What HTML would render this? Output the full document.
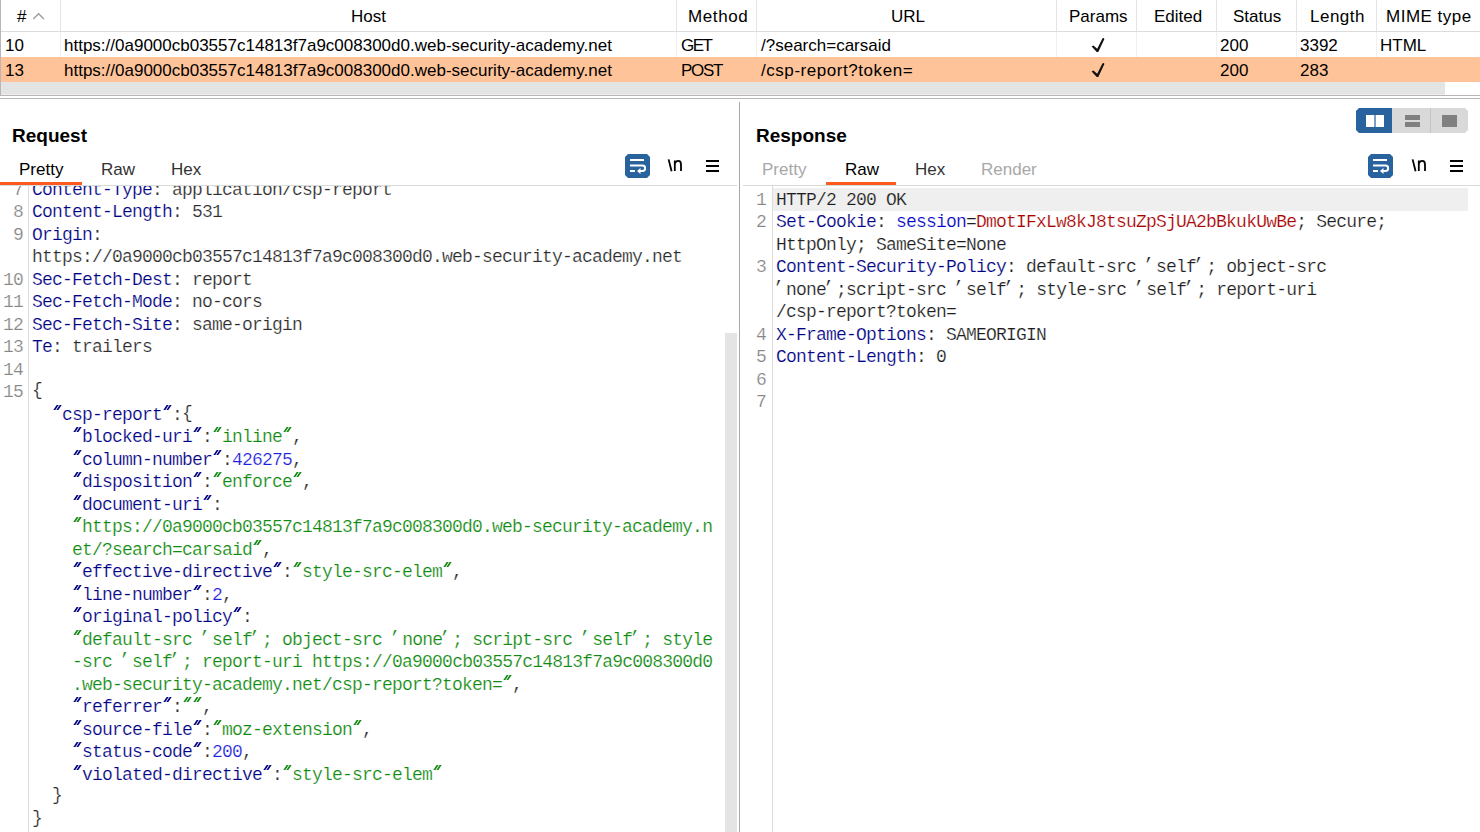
<!DOCTYPE html>
<html><head><meta charset="utf-8">
<style>
*{box-sizing:border-box;margin:0;padding:0}
html,body{width:1480px;height:832px;overflow:hidden;background:#fff}
body{position:relative;font-family:"Liberation Sans",sans-serif;color:#000}
.abs{position:absolute}
.t{position:absolute;white-space:pre;font-size:17px;line-height:20px}
.vl{position:absolute;width:1px;background:#e6e6e6}
.hl{position:absolute;height:1px;background:#e0e0e0}
.ln{position:absolute;white-space:pre;font-family:"Liberation Mono",monospace;font-size:18px;line-height:22px;color:#868686;text-align:right;letter-spacing:-0.8px;-webkit-text-stroke:0.2px #fff}
.cl{position:absolute;white-space:pre;font-family:"Liberation Mono",monospace;font-size:18px;letter-spacing:-0.8px;line-height:22px;-webkit-text-stroke:0.2px #fff}
.hlrow{-webkit-text-stroke:0.2px #efefef}
.k{color:#000084}
.v{color:#2c2c2c}
.b{color:#1c1c1c}
.s{color:#0f8a0f}
.n{color:#1f1fe0}
.c{color:#0000c8}
.r{color:#a80000}
.clip{position:absolute;overflow:hidden}
.q{display:inline-block;width:10px;height:0;position:relative}
.q::before{content:"";box-sizing:border-box;position:absolute;left:2.5px;bottom:10px;width:5px;height:5px;border-left:2px solid currentColor;border-right:2px solid currentColor;transform:skewX(-34deg)}
.sq{position:relative;left:-3px;top:-2px}
.br{position:relative;top:-2px}
</style></head><body>

<!-- table -->
<div class="abs" style="left:0;top:0;width:1px;height:96px;background:#b9b5b8"></div>
<div class="hl" style="left:1px;top:31px;width:1479px;background:#dcdcdc"></div>
<div class="vl" style="left:60px;top:0;height:31px;background:#e4e4e4"></div><div class="vl" style="left:60px;top:32px;height:25px;background:#f0f0f0"></div>
<div class="vl" style="left:676px;top:0;height:31px;background:#e4e4e4"></div><div class="vl" style="left:676px;top:32px;height:25px;background:#f0f0f0"></div>
<div class="vl" style="left:756px;top:0;height:31px;background:#e4e4e4"></div><div class="vl" style="left:756px;top:32px;height:25px;background:#f0f0f0"></div>
<div class="vl" style="left:1056px;top:0;height:31px;background:#e4e4e4"></div><div class="vl" style="left:1056px;top:32px;height:25px;background:#f0f0f0"></div>
<div class="vl" style="left:1136px;top:0;height:31px;background:#e4e4e4"></div><div class="vl" style="left:1136px;top:32px;height:25px;background:#f0f0f0"></div>
<div class="vl" style="left:1216px;top:0;height:31px;background:#e4e4e4"></div><div class="vl" style="left:1216px;top:32px;height:25px;background:#f0f0f0"></div>
<div class="vl" style="left:1296px;top:0;height:31px;background:#e4e4e4"></div><div class="vl" style="left:1296px;top:32px;height:25px;background:#f0f0f0"></div>
<div class="vl" style="left:1376px;top:0;height:31px;background:#e4e4e4"></div><div class="vl" style="left:1376px;top:32px;height:25px;background:#f0f0f0"></div>

<div class="t" style="left:17px;top:7px">#</div>
<svg class="abs" style="left:32px;top:11px" width="14" height="10" viewBox="0 0 14 10"><path d="M1.3 8 L6.6 2.7 L11.9 8" fill="none" stroke="#9a9a9a" stroke-width="1.3"/></svg>
<div class="t" style="left:351px;top:7px">Host</div>
<div class="t" style="left:688px;top:7px;letter-spacing:0.6px">Method</div>
<div class="t" style="left:891px;top:7px">URL</div>
<div class="t" style="left:1069px;top:7px">Params</div>
<div class="t" style="left:1154px;top:7px">Edited</div>
<div class="t" style="left:1233px;top:7px">Status</div>
<div class="t" style="left:1310px;top:7px;letter-spacing:0.5px">Length</div>
<div class="t" style="left:1386px;top:7px;letter-spacing:0.5px">MIME type</div>

<div class="abs" style="left:1px;top:57px;width:1479px;height:25px;background:#ffc399"></div>

<div class="t" style="left:5px;top:36px">10</div>
<div class="t" style="left:64px;top:36px">https://0a9000cb03557c14813f7a9c008300d0.web-security-academy.net</div>
<div class="t" style="left:681px;top:36px;letter-spacing:-1.5px">GET</div>
<div class="t" style="left:761px;top:36px;letter-spacing:0px">/?search=carsaid</div>
<svg class="abs" style="left:1090px;top:37px" width="16" height="16" viewBox="0 0 16 16"><path d="M1.6 9.6L3.4 8.4L7.2 11.8L12.4 1.6C12.8 0.8 14.2 0.9 14.4 1.9L8.3 14.9L6.8 15Z" fill="#111"/></svg>
<div class="t" style="left:1220px;top:36px">200</div>
<div class="t" style="left:1300px;top:36px">3392</div>
<div class="t" style="left:1380px;top:36px">HTML</div>

<div class="t" style="left:5px;top:61px">13</div>
<div class="t" style="left:64px;top:61px">https://0a9000cb03557c14813f7a9c008300d0.web-security-academy.net</div>
<div class="t" style="left:681px;top:61px;letter-spacing:-1.3px">POST</div>
<div class="t" style="left:761px;top:61px;letter-spacing:0.55px">/csp-report?token=</div>
<svg class="abs" style="left:1090px;top:62px" width="16" height="16" viewBox="0 0 16 16"><path d="M1.6 9.6L3.4 8.4L7.2 11.8L12.4 1.6C12.8 0.8 14.2 0.9 14.4 1.9L8.3 14.9L6.8 15Z" fill="#111"/></svg>
<div class="t" style="left:1220px;top:61px">200</div>
<div class="t" style="left:1300px;top:61px">283</div>

<div class="abs" style="left:1px;top:82px;width:1444px;height:12px;background:#e4e4e4"></div><div class="abs" style="left:1px;top:94px;width:1444px;height:1px;background:#eeeeee"></div>
<div class="abs" style="left:0;top:95px;width:1480px;height:1px;background:#bbb5b6"></div>
<div class="abs" style="left:0;top:98px;width:1480px;height:1px;background:#bbb5b6"></div>

<!-- divider -->
<div class="abs" style="left:739px;top:102px;width:1px;height:730px;background:#aaa5a7"></div>

<!-- REQUEST -->
<div class="abs" style="left:12px;top:125px;font-size:19px;font-weight:bold;line-height:22px">Request</div>
<div class="t" style="left:19px;top:160px">Pretty</div>
<div class="t" style="left:101px;top:160px;color:#333">Raw</div>
<div class="t" style="left:171px;top:160px;color:#333">Hex</div>

<!-- wrap btn -->
<svg class="abs" style="left:625px;top:154px" width="25" height="24" viewBox="0 0 25 24"><path d="M3 0H22L25 3V21L22 24H3L0 21V3Z" fill="#29639e"/><path d="M5 6H19M5 11.5H17.5C21 11.5 21 17 17.5 17H13M5 17H10" fill="none" stroke="#fff" stroke-width="2"/><path d="M12 17L15.5 14V20Z" fill="#fff"/></svg>
<svg class="abs" style="left:662px;top:154px" width="26" height="22" viewBox="0 0 26 22"><path d="M6.6 5.4L9.6 17.2M12.8 17V6.4M12.8 9.6C13.6 7.6 15 6.9 16.3 6.9C18.2 6.9 19 8.1 19 10.4V17" fill="none" stroke="#000" stroke-width="1.8"/></svg>
<svg class="abs" style="left:706px;top:160px" width="13" height="12" viewBox="0 0 13 12"><path d="M0 1H13M0 6H13M0 11H13" stroke="#000" stroke-width="2"/></svg>

<div class="abs" style="left:0;top:185px;width:737px;height:1px;background:#d9dbdb"></div>
<div class="abs" style="left:0;top:182px;width:82px;height:3px;background:#ff5a1f"></div>

<div class="abs" style="left:28px;top:186px;width:1px;height:646px;background:#dcdcdc"></div>
<div class="clip" style="left:0;top:186px;width:724px;height:646px">
<div style="position:absolute;left:0;top:-186px">
<div class="ln" style="top:179px;left:0;width:23px">7</div>
<div class="cl" style="top:179px;left:32px"><span class="k">Content-Type</span><span class="v">: application/csp-report</span></div>
<div class="ln" style="top:201px;left:0;width:23px">8</div>
<div class="cl" style="top:201px;left:32px"><span class="k">Content-Length</span><span class="v">: 531</span></div>
<div class="ln" style="top:224px;left:0;width:23px">9</div>
<div class="cl" style="top:224px;left:32px"><span class="k">Origin</span><span class="v">:</span></div>
<div class="cl" style="top:246px;left:32px"><span class="v">https://0a9000cb03557c14813f7a9c008300d0.web-security-academy.net</span></div>
<div class="ln" style="top:269px;left:0;width:23px">10</div>
<div class="cl" style="top:269px;left:32px"><span class="k">Sec-Fetch-Dest</span><span class="v">: report</span></div>
<div class="ln" style="top:291px;left:0;width:23px">11</div>
<div class="cl" style="top:291px;left:32px"><span class="k">Sec-Fetch-Mode</span><span class="v">: no-cors</span></div>
<div class="ln" style="top:314px;left:0;width:23px">12</div>
<div class="cl" style="top:314px;left:32px"><span class="k">Sec-Fetch-Site</span><span class="v">: same-origin</span></div>
<div class="ln" style="top:336px;left:0;width:23px">13</div>
<div class="cl" style="top:336px;left:32px"><span class="k">Te</span><span class="v">: trailers</span></div>
<div class="ln" style="top:359px;left:0;width:23px">14</div>
<div class="ln" style="top:381px;left:0;width:23px">15</div>
<div class="cl" style="top:381px;left:32px"><span class="v"><span class="br">{</span></span></div>
<div class="cl" style="top:404px;left:32px"><span class="v">  </span><span class="k"><span class="q"></span>csp-report<span class="q"></span></span><span class="v">:<span class="br">{</span></span></div>
<div class="cl" style="top:426px;left:32px"><span class="v">    </span><span class="k"><span class="q"></span>blocked-uri<span class="q"></span></span><span class="v">:</span><span class="s"><span class="q"></span>inline<span class="q"></span></span><span class="v">,</span></div>
<div class="cl" style="top:449px;left:32px"><span class="v">    </span><span class="k"><span class="q"></span>column-number<span class="q"></span></span><span class="v">:</span><span class="n">426275</span><span class="v">,</span></div>
<div class="cl" style="top:471px;left:32px"><span class="v">    </span><span class="k"><span class="q"></span>disposition<span class="q"></span></span><span class="v">:</span><span class="s"><span class="q"></span>enforce<span class="q"></span></span><span class="v">,</span></div>
<div class="cl" style="top:494px;left:32px"><span class="v">    </span><span class="k"><span class="q"></span>document-uri<span class="q"></span></span><span class="v">:</span></div>
<div class="cl" style="top:516px;left:32px"><span class="v">    </span><span class="s"><span class="q"></span>https://0a9000cb03557c14813f7a9c008300d0.web-security-academy.n</span></div>
<div class="cl" style="top:539px;left:32px"><span class="v">    </span><span class="s">et/?search=carsaid<span class="q"></span></span><span class="v">,</span></div>
<div class="cl" style="top:561px;left:32px"><span class="v">    </span><span class="k"><span class="q"></span>effective-directive<span class="q"></span></span><span class="v">:</span><span class="s"><span class="q"></span>style-src-elem<span class="q"></span></span><span class="v">,</span></div>
<div class="cl" style="top:584px;left:32px"><span class="v">    </span><span class="k"><span class="q"></span>line-number<span class="q"></span></span><span class="v">:</span><span class="n">2</span><span class="v">,</span></div>
<div class="cl" style="top:606px;left:32px"><span class="v">    </span><span class="k"><span class="q"></span>original-policy<span class="q"></span></span><span class="v">:</span></div>
<div class="cl" style="top:629px;left:32px"><span class="v">    </span><span class="s"><span class="q"></span>default-src <span class="sq">&#8217;</span>self<span class="sq">&#8217;</span>; object-src <span class="sq">&#8217;</span>none<span class="sq">&#8217;</span>; script-src <span class="sq">&#8217;</span>self<span class="sq">&#8217;</span>; style</span></div>
<div class="cl" style="top:651px;left:32px"><span class="v">    </span><span class="s">-src <span class="sq">&#8217;</span>self<span class="sq">&#8217;</span>; report-uri https://0a9000cb03557c14813f7a9c008300d0</span></div>
<div class="cl" style="top:674px;left:32px"><span class="v">    </span><span class="s">.web-security-academy.net/csp-report?token=<span class="q"></span></span><span class="v">,</span></div>
<div class="cl" style="top:696px;left:32px"><span class="v">    </span><span class="k"><span class="q"></span>referrer<span class="q"></span></span><span class="v">:</span><span class="s"><span class="q"></span><span class="q"></span></span><span class="v">,</span></div>
<div class="cl" style="top:719px;left:32px"><span class="v">    </span><span class="k"><span class="q"></span>source-file<span class="q"></span></span><span class="v">:</span><span class="s"><span class="q"></span>moz-extension<span class="q"></span></span><span class="v">,</span></div>
<div class="cl" style="top:741px;left:32px"><span class="v">    </span><span class="k"><span class="q"></span>status-code<span class="q"></span></span><span class="v">:</span><span class="n">200</span><span class="v">,</span></div>
<div class="cl" style="top:764px;left:32px"><span class="v">    </span><span class="k"><span class="q"></span>violated-directive<span class="q"></span></span><span class="v">:</span><span class="s"><span class="q"></span>style-src-elem<span class="q"></span></span></div>
<div class="cl" style="top:786px;left:32px"><span class="v">  <span class="br">}</span></span></div>
<div class="cl" style="top:809px;left:32px"><span class="v"><span class="br">}</span></span></div>
</div>
</div>
<div class="abs" style="left:725px;top:333px;width:12px;height:499px;background:#e4e4e4"></div>

<!-- RESPONSE -->
<div class="abs" style="left:756px;top:125px;font-size:19px;font-weight:bold;line-height:22px">Response</div>
<svg class="abs" style="left:1356px;top:108px" width="112" height="25" viewBox="0 0 112 25">
<path d="M3 0H109L112 3V22L109 25H3L0 22V3Z" fill="#d9d9d9"/>
<path d="M3 0H36V25H3L0 22V3Z" fill="#29639e"/>
<rect x="74" y="0" width="1" height="25" fill="#c4c4c4"/>
<rect x="10" y="7" width="18" height="12" fill="#fff"/><rect x="18" y="7" width="2" height="12" fill="#7d9ec2"/>
<rect x="49" y="7" width="15" height="5" fill="#808080"/><rect x="49" y="14" width="15" height="5" fill="#808080"/>
<rect x="86" y="7" width="15" height="12" fill="#808080"/>
</svg>
<div class="t" style="left:762px;top:160px;color:#a8a8a8">Pretty</div>
<div class="t" style="left:845px;top:160px">Raw</div>
<div class="t" style="left:915px;top:160px;color:#333">Hex</div>
<div class="t" style="left:981px;top:160px;color:#a8a8a8">Render</div>

<svg class="abs" style="left:1368px;top:154px" width="25" height="24" viewBox="0 0 25 24"><path d="M3 0H22L25 3V21L22 24H3L0 21V3Z" fill="#29639e"/><path d="M5 6H19M5 11.5H17.5C21 11.5 21 17 17.5 17H13M5 17H10" fill="none" stroke="#fff" stroke-width="2"/><path d="M12 17L15.5 14V20Z" fill="#fff"/></svg>
<svg class="abs" style="left:1406px;top:154px" width="26" height="22" viewBox="0 0 26 22"><path d="M6.6 5.4L9.6 17.2M12.8 17V6.4M12.8 9.6C13.6 7.6 15 6.9 16.3 6.9C18.2 6.9 19 8.1 19 10.4V17" fill="none" stroke="#000" stroke-width="1.8"/></svg>
<svg class="abs" style="left:1450px;top:160px" width="13" height="12" viewBox="0 0 13 12"><path d="M0 1H13M0 6H13M0 11H13" stroke="#000" stroke-width="2"/></svg>

<div class="abs" style="left:743px;top:185px;width:737px;height:1px;background:#d9dbdb"></div>
<div class="abs" style="left:826px;top:182px;width:70px;height:3px;background:#ff5a1f"></div>

<div class="clip" style="left:742px;top:186px;width:738px;height:646px">
<div class="abs" style="left:31px;top:2px;width:695px;height:23px;background:#efefef"></div>
<div class="abs" style="left:30px;top:0;width:1px;height:646px;background:#dcdcdc"></div>
<div style="position:absolute;left:0;top:-186px">
<div class="ln" style="top:189px;left:0;width:24px">1</div>
<div class="cl hlrow" style="top:189px;left:34px"><span class="b">HTTP/2 200 OK</span></div>
<div class="ln" style="top:211px;left:0;width:24px">2</div>
<div class="cl" style="top:211px;left:34px"><span class="k">Set-Cookie</span><span class="b">: </span><span class="c">session</span><span class="b">=</span><span class="r">DmotIFxLw8kJ8tsuZpSjUA2bBkukUwBe</span><span class="b">; Secure;</span></div>
<div class="cl" style="top:234px;left:34px"><span class="b">HttpOnly; SameSite=None</span></div>
<div class="ln" style="top:256px;left:0;width:24px">3</div>
<div class="cl" style="top:256px;left:34px"><span class="k">Content-Security-Policy</span><span class="b">: default-src <span class="sq">&#8217;</span>self<span class="sq">&#8217;</span>; object-src</span></div>
<div class="cl" style="top:279px;left:34px"><span class="b"><span class="sq">&#8217;</span>none<span class="sq">&#8217;</span>;script-src <span class="sq">&#8217;</span>self<span class="sq">&#8217;</span>; style-src <span class="sq">&#8217;</span>self<span class="sq">&#8217;</span>; report-uri</span></div>
<div class="cl" style="top:301px;left:34px"><span class="b">/csp-report?token=</span></div>
<div class="ln" style="top:324px;left:0;width:24px">4</div>
<div class="cl" style="top:324px;left:34px"><span class="k">X-Frame-Options</span><span class="b">: SAMEORIGIN</span></div>
<div class="ln" style="top:346px;left:0;width:24px">5</div>
<div class="cl" style="top:346px;left:34px"><span class="k">Content-Length</span><span class="b">: 0</span></div>
<div class="ln" style="top:369px;left:0;width:24px">6</div>
<div class="ln" style="top:391px;left:0;width:24px">7</div>
</div>
</div>

</body></html>
